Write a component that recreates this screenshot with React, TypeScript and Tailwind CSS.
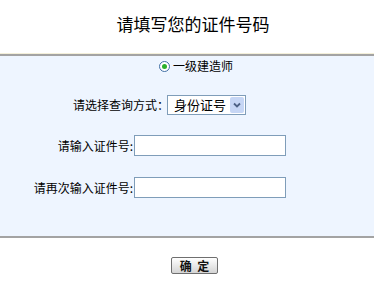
export default function App() {
  return (
    <div className="flex h-[283px] w-[374px] flex-col bg-white text-[12px] text-black [font-family:'Noto_Sans_CJK_SC',sans-serif]">
      <div className="flex h-[53px] items-start justify-center pt-[14px]">
        <h1 className="pl-[12px] text-[17px] leading-[20px] font-normal">请填写您的证件号码</h1>
      </div>
      <div className="h-px bg-[#f3efd9]" />
      <div className="flex h-[184px] flex-col border-t-2 border-b-2 border-[#a3a3a3] bg-[#eef5ff]">
        <div className="flex items-center justify-center pt-[3px] pl-[18px] leading-[14px]">
          <span className="mr-[3px] flex h-[11px] w-[11px] items-center justify-center rounded-full border border-[#3f6ea5] bg-white">
            <span className="h-[5px] w-[5px] rounded-full bg-[#2bb02b]" />
          </span>
          <span>一级建造师</span>
        </div>
        <div className="mt-[22px] flex items-center pl-[73px]">
          <span className="w-[94px] shrink-0 whitespace-nowrap">请选择查询方式：</span>
          <div className="flex h-[20px] w-[79px] shrink-0 items-center border border-[#7f9db9] bg-white">
            <span className="flex-1 pl-[6px] text-[13px] leading-[18px] whitespace-nowrap">身份证号</span>
            <span className="mr-px flex h-[16px] w-[14px] items-center justify-center rounded-[2px] bg-[#c6d6f5]">
              <svg width="8" height="6" viewBox="0 0 8 6">
                <path d="M1 1.5 L4 4.5 L7 1.5" fill="none" stroke="#4d6185" strokeWidth="1.8" />
              </svg>
            </span>
          </div>
        </div>
        <div className="mt-[20px] grid grid-cols-[134px_152px] items-center">
          <span className="pr-px text-right whitespace-nowrap">请输入证件号:</span>
          <input className="h-[21px] border border-[#7f9db9] bg-white outline-none" />
        </div>
        <div className="mt-[21px] grid grid-cols-[134px_152px] items-center">
          <span className="pr-px text-right whitespace-nowrap">请再次输入证件号:</span>
          <input className="h-[21px] border border-[#7f9db9] bg-white outline-none" />
        </div>
      </div>
      <div className="flex justify-center pt-[19px] pl-[15px]">
        <button className="h-[17px] w-[47px] rounded-[2px] border border-[#6f6f6f] bg-gradient-to-b from-[#ffffff] to-[#d4d4d4] text-[12px] leading-[15px] font-bold text-[#111]">
          确&nbsp;&nbsp;定
        </button>
      </div>
    </div>
  );
}
